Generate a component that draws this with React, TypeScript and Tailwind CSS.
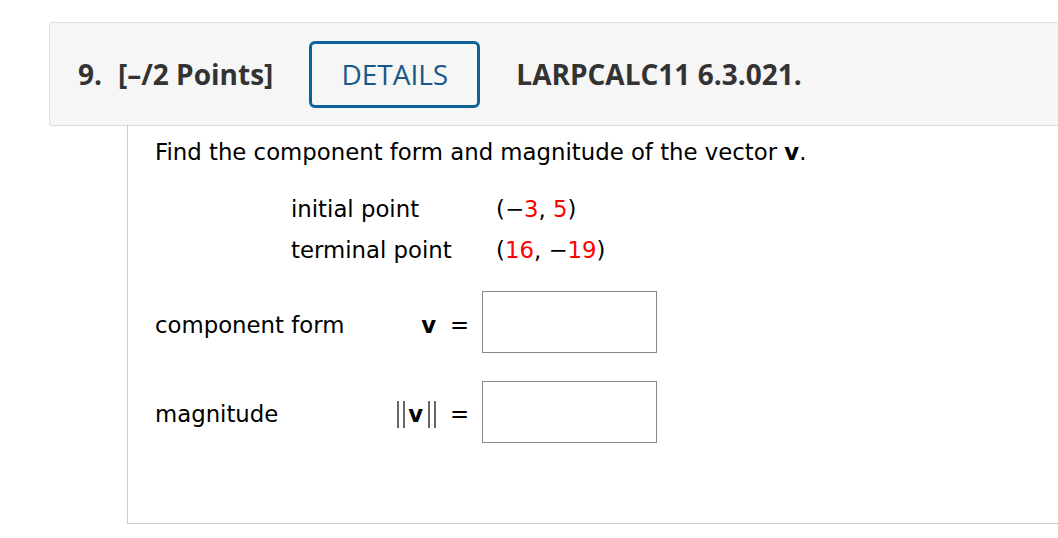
export default function App() {
  return (
    <div className="min-h-screen w-full bg-white overflow-hidden pt-[22px]">
      {/* question header */}
      <div className="ml-[49px] -mr-4 h-[104px] bg-[#f6f6f6] border border-[#dddddd] rounded-l-[3px] flex items-center pl-[28px] font-['Open_Sans',sans-serif] text-[#333333]">
        <span className="text-[28px] font-bold">9.</span>
        <span className="ml-[16px] text-[28px] font-bold">[–/2 Points]</span>
        <button className="ml-[36px] w-[171px] h-[67px] border-[3px] border-[#0b6399] rounded-[6px] text-[28px] text-[#17598a]">
          DETAILS
        </button>
        <span className="ml-[36px] text-[28px] font-bold">LARPCALC11 6.3.021.</span>
      </div>

      {/* question body */}
      <div className="ml-[127px] -mr-4 h-[399px] border-l border-b border-[#cccccc] -mt-px font-['DejaVu_Sans',Verdana,sans-serif] text-[22.8px] text-black">
        <div className="pl-[27px] pt-[14px]">
          <p className="leading-[26px]">
            Find the component form and magnitude of the vector <b>v</b>.
          </p>

          <div className="ml-[136px] mt-[31px] grid grid-cols-[205px_auto] gap-y-[15px] leading-[26px]">
            <span>initial point</span>
            <span>
              (−<span className="text-[#ff0000]">3</span>, <span className="text-[#ff0000]">5</span>)
            </span>
            <span>terminal point</span>
            <span>
              (<span className="text-[#ff0000]">16</span>, −<span className="text-[#ff0000]">19</span>)
            </span>
          </div>

          <div className="mt-[28px] flex flex-col gap-[28px]">
            <div className="flex items-center">
              <span className="w-[226px] pt-[6px]">component form</span>
              <span className="w-[55px] pt-[6px] text-right font-bold">v</span>
              <span className="ml-[14px] pt-[6px]">=</span>
              <input className="ml-[13px] w-[175px] h-[62px] border border-[#888888] bg-white" />
            </div>
            <div className="flex items-center">
              <span className="w-[226px] pt-[4px]">magnitude</span>
              <span className="w-[55px] pt-[4px] flex items-center justify-end">
                <span className="flex gap-[4px]">
                  <span className="w-[2px] h-[27px] bg-[#666666]" />
                  <span className="w-[2px] h-[27px] bg-[#666666]" />
                </span>
                <b className="ml-[3px] mr-[5px]">v</b>
                <span className="flex gap-[4px]">
                  <span className="w-[2px] h-[27px] bg-[#666666]" />
                  <span className="w-[2px] h-[27px] bg-[#666666]" />
                </span>
              </span>
              <span className="ml-[14px] pt-[4px]">=</span>
              <input className="ml-[13px] w-[175px] h-[62px] border border-[#888888] bg-white" />
            </div>
          </div>
        </div>
      </div>
    </div>
  );
}
